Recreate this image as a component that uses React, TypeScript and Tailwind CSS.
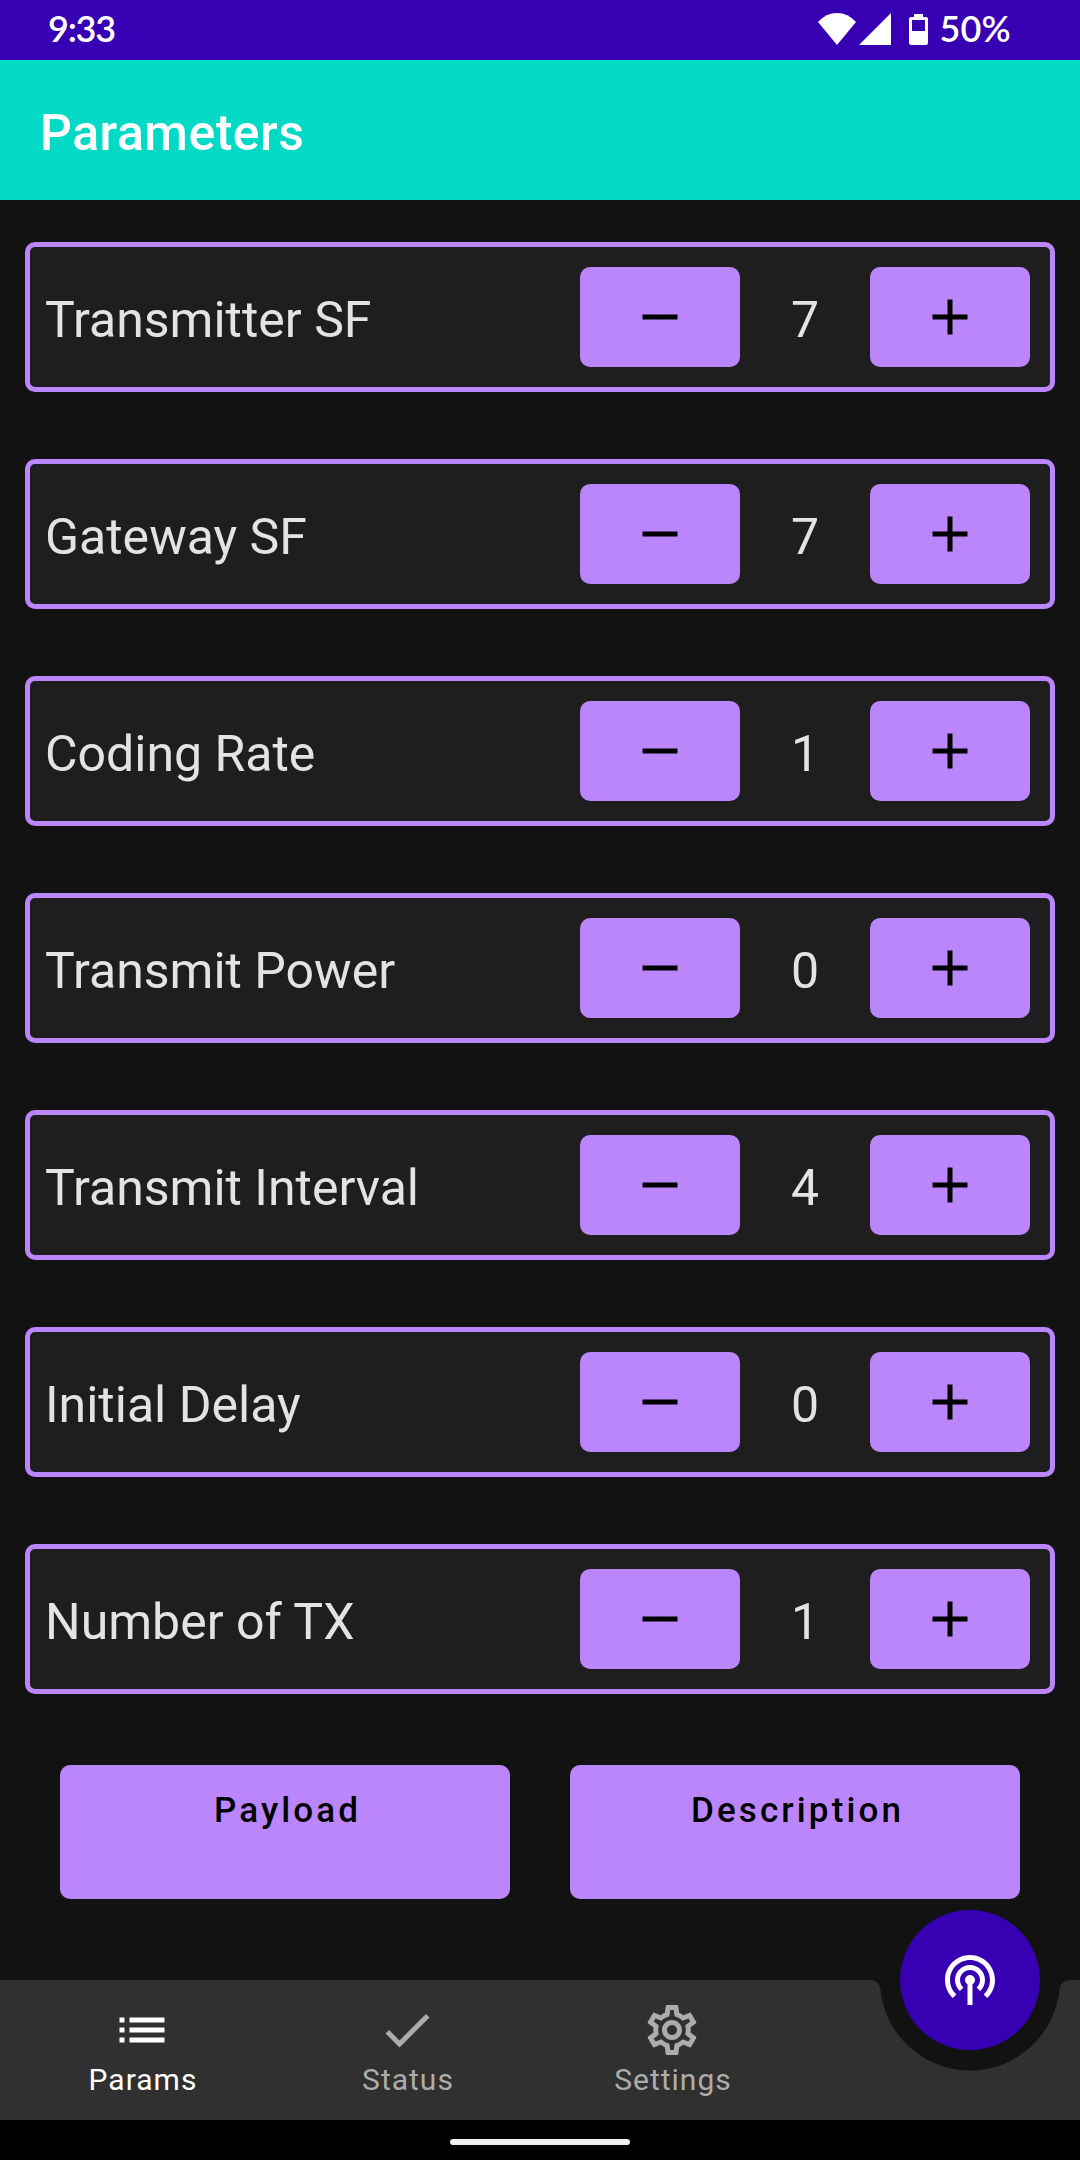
import { useState } from "react";
import type { ReactNode } from "react";
import { MdAdd, MdCheck, MdList, MdOutlineSettings, MdPodcasts, MdRemove } from "react-icons/md";

const initialParams = [
  { name: "Transmitter SF", value: 7 },
  { name: "Gateway SF", value: 7 },
  { name: "Coding Rate", value: 1 },
  { name: "Transmit Power", value: 0 },
  { name: "Transmit Interval", value: 4 },
  { name: "Initial Delay", value: 0 },
  { name: "Number of TX", value: 1 },
];

function StatusBar() {
  return (
    <header className="flex h-[60px] shrink-0 items-center justify-between bg-[#3700b3] pr-[69px] pb-1 pl-[48px] font-['Lato',sans-serif] text-[36px] leading-[56px] text-white">
      <span className="font-semibold tracking-[-1.2px]">9:33</span>
      <div className="flex items-center">
        <svg className="mt-1 h-[60px] w-[110px]" viewBox="818 0 110 60" fill="currentColor">
          <path d="M837 45 L818 22 Q826 13 837 13 Q848 13 856 22 Z" />
          <path d="M859 45 L891 13 V45 Z" />
          <path
            fillRule="evenodd"
            d="M914 14 H923 V17 H926 Q928 17 928 19 V43 Q928 45 926 45 H911 Q909 45 909 43 V19 Q909 17 911 17 H914 Z M912 20 V31 H925 V20 Z"
          />
        </svg>
        <span className="w-[83px] text-right font-semibold tracking-[0.2px]">50%</span>
      </div>
    </header>
  );
}

function StepButton({ label, onClick, children }: { label: string; onClick: () => void; children: ReactNode }) {
  return (
    <button
      aria-label={label}
      onClick={onClick}
      className="flex h-[100px] w-[160px] items-center justify-center rounded-[10px] bg-[#bb86fc] text-[60px] text-black"
    >
      {children}
    </button>
  );
}

function ParamCard({ name, value, onStep }: { name: string; value: number; onStep: (by: number) => void }) {
  return (
    <div className="flex h-[150px] items-center rounded-[10px] border-[5px] border-[#bb86fc] bg-[#1e1e1e] pr-5 pl-[15px]">
      <span className="flex-1 pt-1.5 text-[50px] leading-[60px] text-[#e3e3e3]">{name}</span>
      <StepButton label={`Decrease ${name}`} onClick={() => onStep(-1)}>
        <MdRemove />
      </StepButton>
      <span className="w-[130px] pt-1.5 text-center text-[50px] leading-[60px] text-[#e3e3e3]">{value}</span>
      <StepButton label={`Increase ${name}`} onClick={() => onStep(1)}>
        <MdAdd />
      </StepButton>
    </div>
  );
}

function ActionButton({ children }: { children: ReactNode }) {
  return (
    <button className="flex h-[134px] w-[450px] justify-center rounded-[10px] bg-[#bb86fc] pt-[25px] pl-[5px] text-[35px] leading-[41px] font-medium tracking-[3.125px] text-black">
      {children}
    </button>
  );
}

function NavTab({ icon, label, active = false }: { icon: ReactNode; label: string; active?: boolean }) {
  return (
    <button
      className={`flex w-[265px] flex-col items-center pt-5 ${active ? "text-white" : "text-[#acacac]"}`}
    >
      <span className="pr-px text-[60px]">{icon}</span>
      <span className="pl-px text-[30px] leading-[40px] tracking-[1px]">{label}</span>
    </button>
  );
}

export default function App() {
  const [params, setParams] = useState(initialParams);
  const step = (index: number, by: number) =>
    setParams((list) => list.map((p, i) => (i === index ? { ...p, value: p.value + by } : p)));

  return (
    <div className="flex h-[2160px] w-[1080px] flex-col overflow-hidden bg-[#121212] font-['Roboto',sans-serif]">
      <StatusBar />
      <div className="flex h-[140px] shrink-0 items-center bg-[#03dac5] pt-1.5 pl-10">
        <h1 className="text-[50px] leading-[60px] font-medium tracking-[0.5px] text-white">Parameters</h1>
      </div>
      <main className="flex-1 px-[25px] pt-[42px]">
        <div className="flex flex-col gap-[67px]">
          {params.map((p, i) => (
            <ParamCard key={p.name} name={p.name} value={p.value} onStep={(by) => step(i, by)} />
          ))}
        </div>
        <div className="mt-[71px] flex justify-between px-[35px]">
          <ActionButton>Payload</ActionButton>
          <ActionButton>Description</ActionButton>
        </div>
      </main>
      <nav className="relative flex h-[140px] shrink-0 pl-[10px]">
        <svg className="absolute inset-0 h-[140px] w-[1080px]" viewBox="0 0 1080 140">
          <path
            fill="#303030"
            d="M0 0 H870.5 A10 10 0 0 1 880.4 9 A90 90 0 0 0 1059.6 9 A10 10 0 0 1 1069.5 0 H1080 V140 H0 Z"
          />
        </svg>
        <div className="relative flex">
          <NavTab icon={<MdList />} label="Params" active />
          <NavTab icon={<MdCheck />} label="Status" />
          <NavTab icon={<MdOutlineSettings />} label="Settings" />
        </div>
        <button
          aria-label="Transmit"
          className="absolute top-[-70px] left-[900px] flex size-[140px] items-center justify-center rounded-full bg-[#3700b3] text-[60px] text-white"
        >
          <MdPodcasts />
        </button>
      </nav>
      <footer className="flex h-10 shrink-0 justify-center bg-black pt-[19px]">
        <div className="h-1.5 w-[180px] rounded-full bg-[#f0eef2]" />
      </footer>
    </div>
  );
}
